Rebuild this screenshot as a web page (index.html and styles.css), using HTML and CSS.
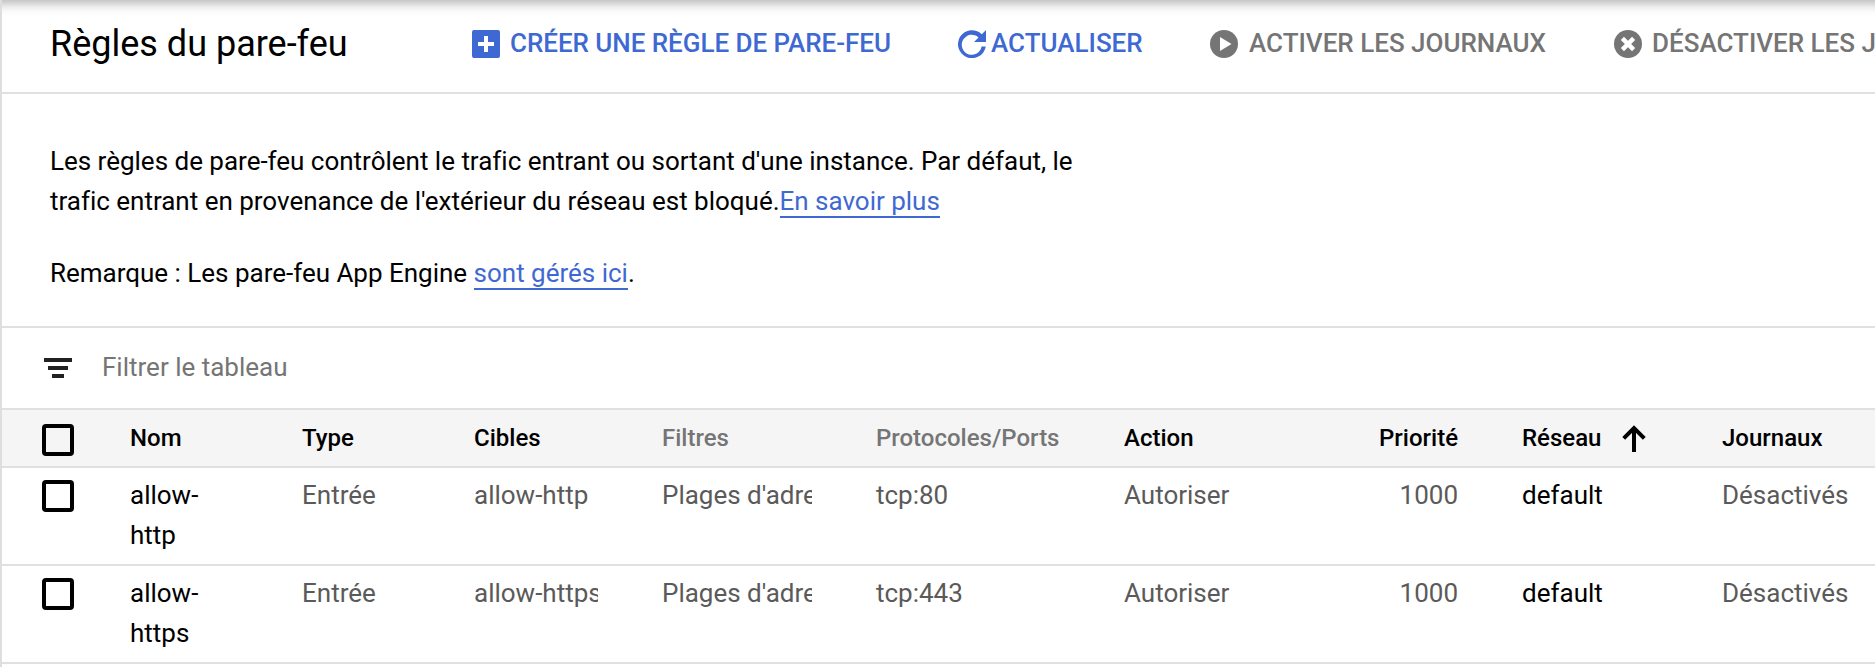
FILE: index.html
```html
<!DOCTYPE html>
<html lang="fr">
<head>
<meta charset="utf-8">
<title>Règles du pare-feu</title>
<link rel="stylesheet" href="styles.css">
</head>
<body>
<main class="page">
  <header class="toolbar">
    <h1 class="title">Règles du pare-feu</h1>
    <button class="action create">
      <svg width="28" height="28" viewBox="0 0 28 28"><path fill="currentColor" fill-rule="evenodd" d="M2 0h24a2 2 0 0 1 2 2v24a2 2 0 0 1-2 2H2a2 2 0 0 1-2-2V2a2 2 0 0 1 2-2zM12 6v6H6v4h6v6h4v-6h6v-4h-6V6z"/></svg>
      <span>CRÉER UNE RÈGLE DE PARE-FEU</span>
    </button>
    <button class="action refresh">
      <svg width="28" height="28" viewBox="0 0 28 28"><path fill="currentColor" d="M28 0v12H16l4.5-4.6A10 10 0 1 0 23.6 16.5H27.8A14 14 0 1 1 23.8 4.2z"/></svg>
      <span>ACTUALISER</span>
    </button>
    <button class="action enable">
      <svg width="28" height="28" viewBox="0 0 28 28"><circle cx="14" cy="14" r="14" fill="currentColor"/><path fill="#fff" d="M10 7v14l11.5-7z"/></svg>
      <span>ACTIVER LES JOURNAUX</span>
    </button>
    <button class="action disable">
      <svg width="28" height="28" viewBox="0 0 28 28"><circle cx="14" cy="14" r="14" fill="currentColor"/><path stroke="#fff" stroke-width="4.4" d="M8.4 8.4l11.2 11.2M19.6 8.4L8.4 19.6"/></svg>
      <span>DÉSACTIVER LES JOURNAUX</span>
    </button>
  </header>

  <section class="intro">
    <p>Les règles de pare-feu contrôlent le trafic entrant ou sortant d'une instance. Par défaut, le<br>trafic entrant en provenance de l'extérieur du réseau est bloqué.<a class="link">En savoir plus</a></p>
    <p>Remarque : Les pare-feu App Engine <a class="link">sont gérés ici</a>.</p>
  </section>

  <div class="filter">
    <svg width="28" height="20" viewBox="0 0 28 20"><path fill="#212121" d="M0 0h28v4H0zM4 8h20v4H4zM8 16h12v4H8z"/></svg>
    <span>Filtrer le tableau</span>
  </div>

  <table class="rules">
    <colgroup>
      <col class="c-check"><col class="c-name"><col class="c-type"><col class="c-target"><col class="c-filter"><col class="c-proto"><col class="c-action"><col class="c-prio"><col class="c-net"><col class="c-logs">
    </colgroup>
    <thead>
      <tr>
        <th class="check"><span class="box"></span></th>
        <th>Nom</th><th>Type</th><th>Cibles</th>
        <th class="muted">Filtres</th><th class="muted">Protocoles/Ports</th>
        <th>Action</th><th class="num">Priorité</th>
        <th class="sorted"><span class="sort">Réseau<svg width="24" height="27" viewBox="0 0 24 27"><path fill="none" stroke="#000" stroke-width="4" d="M12 27V3M1.7 13.3L12 3l10.3 10.3"/></svg></span></th>
        <th class="logs">Journaux</th>
      </tr>
    </thead>
    <tbody>
      <tr>
        <td class="check"><span class="box"></span></td>
        <td class="name">allow-http</td><td>Entrée</td><td><div class="clip">allow-http</div></td><td><div class="clip">Plages d'adresses</div></td><td>tcp:80</td><td>Autoriser</td><td class="num">1000</td><td class="net">default</td><td class="logs">Désactivés</td>
      </tr>
      <tr>
        <td class="check"><span class="box"></span></td>
        <td class="name">allow-https</td><td>Entrée</td><td><div class="clip">allow-https</div></td><td><div class="clip">Plages d'adresses</div></td><td>tcp:443</td><td>Autoriser</td><td class="num">1000</td><td class="net">default</td><td class="logs">Désactivés</td>
      </tr>
    </tbody>
  </table>
</main>
</body>
</html>
```

FILE: styles.css
```css
* { box-sizing: border-box; }

body {
  margin: 0;
  background: #fff;
  color: #000;
  font: 400 26px/40px Roboto, sans-serif;
  overflow: hidden;
}

.page {
  height: 667px;
  border-left: 2px solid #dedede;
  overflow: hidden;
}

.toolbar {
  display: flex;
  align-items: flex-start;
  height: 94px;
  padding: 24px 0 0 48px;
  border-bottom: 2px solid #e0e0e0;
  background: linear-gradient(#c6c6c6 0, #d6d6d6 3px, #ececec 7px, #f9f9f9 11px, #fff 16px);
  white-space: nowrap;
  overflow: hidden;
}

.title {
  flex: none;
  width: 422px;
  margin: 0;
  font-size: 36px;
  font-weight: 400;
  line-height: 40px;
}

.action {
  display: flex;
  flex: none;
  align-items: center;
  gap: 10px;
  height: 40px;
  padding: 0;
  border: 0;
  background: none;
  color: #757575;
  font: 500 26px/40px Roboto, sans-serif;
}

.action svg { flex: none; }
.action span { margin-top: -2px; }
.create { width: 486px; color: #3f69d2; letter-spacing: -0.04px; }
.refresh { width: 252px; gap: 5px; color: #3f69d2; }
.enable { width: 404px; gap: 11px; }

.intro {
  height: 234px;
  padding: 47px 0 0 48px;
  border-bottom: 2px solid #e0e0e0;
  letter-spacing: -0.01px;
}

.intro p { margin: 0 0 32px; }

.link {
  border-bottom: 2px solid #3f69d2;
  color: #3f69d2;
}

.filter {
  display: flex;
  align-items: center;
  gap: 30px;
  height: 80px;
  padding-left: 42px;
  color: #757575;
}

.filter span { margin-top: -2px; }

.rules {
  width: 1873px;
  table-layout: fixed;
  border-collapse: separate;
  border-spacing: 0;
  text-align: left;
}

.c-check { width: 128px; }
.c-name, .c-type { width: 172px; }
.c-target { width: 188px; }
.c-filter { width: 214px; }
.c-proto { width: 248px; }
.c-action { width: 200px; }
.c-prio { width: 198px; }
.c-net { width: 200px; }
.c-logs { width: 153px; }

.rules th {
  height: 60px;
  padding: 8px 64px 8px 0;
  border-top: 2px solid #e0e0e0;
  border-bottom: 2px solid #e0e0e0;
  background: #f5f5f5;
  font-size: 24px;
  font-weight: 500;
  vertical-align: top;
  white-space: nowrap;
}

.rules td {
  height: 98px;
  padding: 7px 64px 9px 0;
  border-bottom: 2px solid #e0e0e0;
  color: #5a5a5a;
  vertical-align: top;
  white-space: nowrap;
}

.clip { overflow: hidden; }

.rules .muted { color: #757575; }
.rules .num { text-align: right; }
.rules .name { color: #000; white-space: normal; }
.rules .net { color: #000; }
.rules .logs { padding-right: 0; }
.rules .sorted { padding-right: 0; }

.rules .check { padding: 12px 0 0 40px; }
.rules th.check { padding-top: 14px; }

.box {
  display: block;
  width: 32px;
  height: 32px;
  border: 4px solid #000;
  border-radius: 4px;
}

.sort {
  display: flex;
  align-items: center;
  gap: 21px;
}
```
